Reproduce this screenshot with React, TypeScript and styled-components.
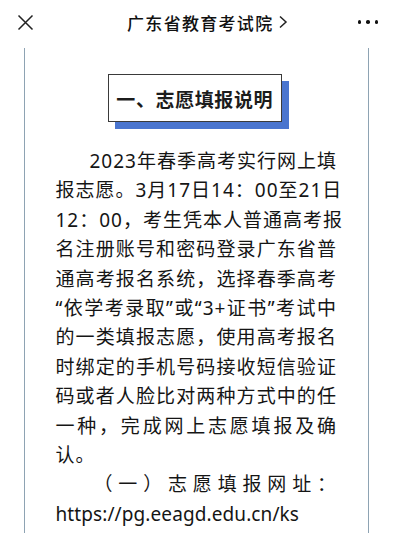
import * as React from 'react';
import styled, { createGlobalStyle } from 'styled-components';

const GlobalStyle = createGlobalStyle`
  html, body {
    margin: 0;
    padding: 0;
    background: #ffffff;
  }
  body {
    font-family: "Noto Sans CJK SC", "Noto Sans", sans-serif;
    color: #1e1e1e;
    overflow: hidden;
  }
`;

const NavBar = styled.div`
  height: 44px;
  display: flex;
  align-items: center;
  justify-content: space-between;
  padding: 0 22px 0 16px;
`;

const NavTitle = styled.div`
  display: flex;
  align-items: center;
  gap: 5px;
  font-size: 17px;
  font-weight: 500;
  letter-spacing: 1.3px;
  color: #111;
  margin-left: 24px;
`;

const IconButton = styled.div`
  width: 18px;
  height: 18px;
  display: flex;
  align-items: center;
  justify-content: center;
`;

const Dots = styled.div`
  display: flex;
  gap: 5px;
`;

const Dot = styled.span`
  width: 3.5px;
  height: 3.5px;
  border-radius: 50%;
  background: #111;
`;

const Page = styled.div`
  padding: 4px 31px 0 23.5px;
`;

const Card = styled.div`
  border-left: 1.5px solid #8ea3b3;
  border-right: 1.5px solid #8ea3b3;
  padding: 26px 31px 0 31px;
  min-height: 600px;
`;

const TitleWrap = styled.div`
  display: flex;
  justify-content: center;
  padding-right: 3px;
`;

const TitleBox = styled.div`
  position: relative;
  width: 174px;
  height: 48px;
`;

const TitleShadow = styled.div`
  position: absolute;
  left: 7px;
  top: 7px;
  width: 174px;
  height: 48px;
  background: #4a75cf;
`;

const TitleFace = styled.div`
  position: relative;
  box-sizing: border-box;
  width: 174px;
  height: 48px;
  border: 1px solid #3a3a3a;
  background: #ffffff;
  display: flex;
  align-items: center;
  justify-content: center;
  font-size: 19px;
  font-weight: 700;
  letter-spacing: 0.6px;
  color: #1c1c1c;
`;

const Body = styled.div`
  margin-top: 25px;
  font-family: "Noto Sans", "Noto Sans CJK SC", sans-serif;
  font-size: 19px;
  line-height: 29.4px;
  letter-spacing: 1px;
  color: #151515;
`;

const Line = styled.div<{ $indent?: number; $justify?: boolean }>`
  white-space: nowrap;
  text-indent: ${(p) => p.$indent ?? 0}px;
  text-align: ${(p) => (p.$justify === false ? 'left' : 'justify')};
  text-align-last: ${(p) => (p.$justify === false ? 'left' : 'justify')};
  text-justify: inter-character;
`;

const Url = styled.div`
  font-family: "Noto Sans", sans-serif;
  font-size: 19px;
  letter-spacing: 0.1px;
  line-height: 29.4px;
`;

const lines: { text: string; indent?: number; justify?: boolean }[] = [
  { text: '2023年春季高考实行网上填', indent: 34 },
  { text: '报志愿。3月17日14：00至21日' },
  { text: '12：00，考生凭本人普通高考报' },
  { text: '名注册账号和密码登录广东省普' },
  { text: '通高考报名系统，选择春季高考' },
  { text: '“依学考录取”或“3+证书”考试中' },
  { text: '的一类填报志愿，使用高考报名' },
  { text: '时绑定的手机号码接收短信验证' },
  { text: '码或者人脸比对两种方式中的任' },
  { text: '一种，完成网上志愿填报及确' },
  { text: '认。', justify: false },
  { text: '（一）志愿填报网址：', indent: 38 },
];

export default function App() {
  return (
    <>
      <GlobalStyle />
      <NavBar>
        <IconButton>
          <svg width="17" height="17" viewBox="0 0 17 17">
            <path d="M1.5 1.5 L15.5 15.5 M15.5 1.5 L1.5 15.5" stroke="#222" strokeWidth="1.5" fill="none" />
          </svg>
        </IconButton>
        <NavTitle>
          广东省教育考试院
          <svg width="10" height="14" viewBox="0 0 10 14">
            <path d="M2 1.5 L8 7 L2 12.5" stroke="#222" strokeWidth="1.5" fill="none" />
          </svg>
        </NavTitle>
        <Dots>
          <Dot />
          <Dot />
          <Dot />
        </Dots>
      </NavBar>
      <Page>
        <Card>
          <TitleWrap>
            <TitleBox>
              <TitleShadow />
              <TitleFace>一、志愿填报说明</TitleFace>
            </TitleBox>
          </TitleWrap>
          <Body>
            {lines.map((l, i) => (
              <Line key={i} $indent={l.indent} $justify={l.justify}>
                {l.text}
              </Line>
            ))}
            <Url>https://pg.eeagd.edu.cn/ks</Url>
          </Body>
        </Card>
      </Page>
    </>
  );
}
